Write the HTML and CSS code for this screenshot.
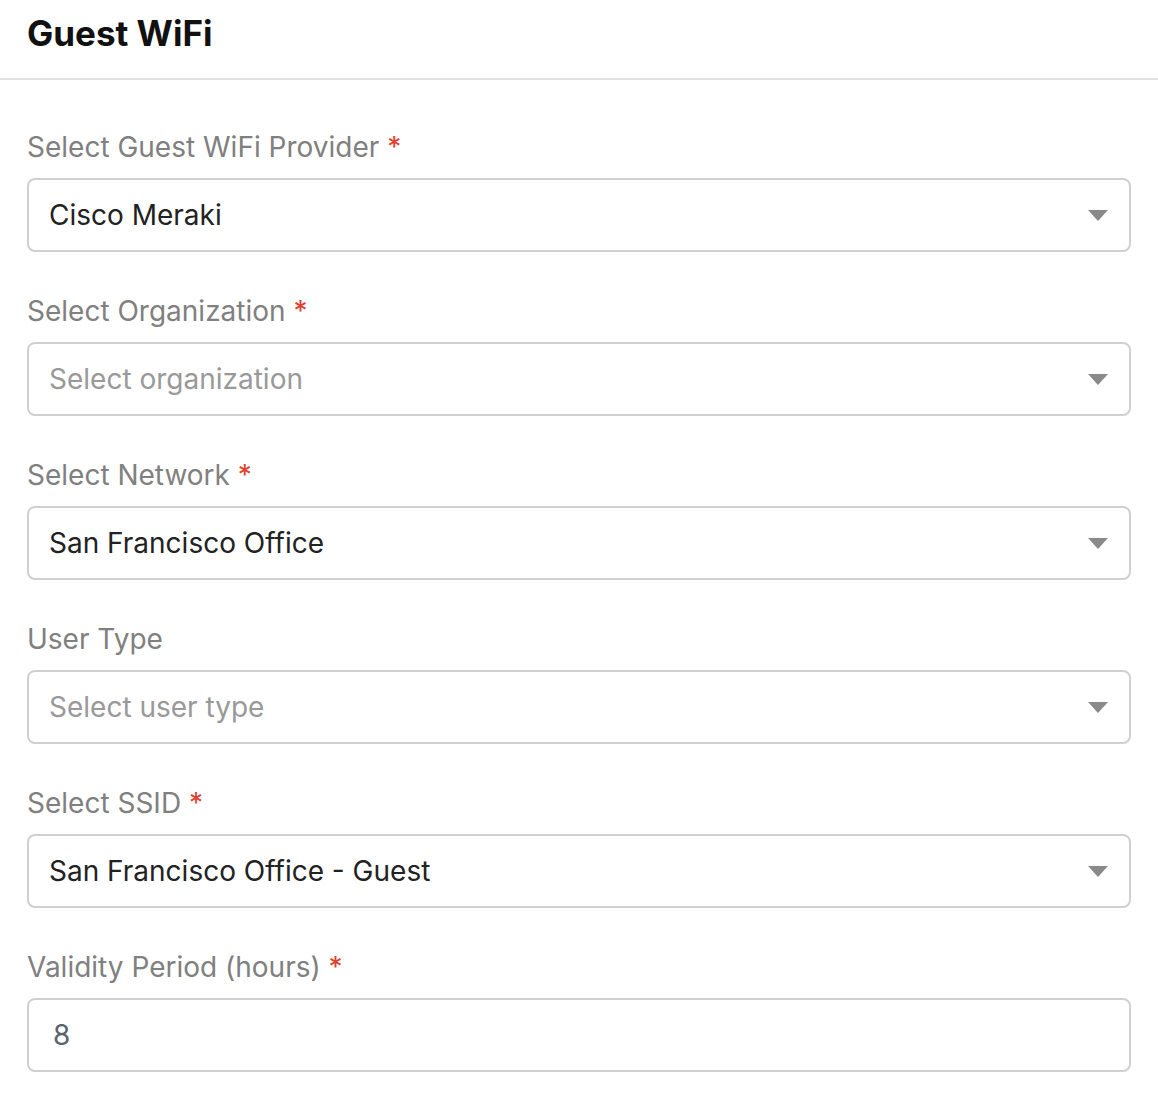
FILE: index.html
```html
<!DOCTYPE html>
<html lang="en">
<head>
  <meta charset="UTF-8">
  <title>Guest WiFi</title>
  <link rel="stylesheet" href="styles.css">
</head>
<body>

  <header class="page-header">
    <h1>Guest WiFi</h1>
  </header>

  <form class="wifi-form">
    <div class="field">
      <label>Select Guest WiFi Provider <span class="req">*</span></label>
      <div class="select-box">
        <span class="value">Cisco Meraki</span>
        <span class="caret"></span>
      </div>
    </div>

    <div class="field">
      <label>Select Organization <span class="req">*</span></label>
      <div class="select-box">
        <span class="value placeholder">Select organization</span>
        <span class="caret"></span>
      </div>
    </div>

    <div class="field">
      <label>Select Network <span class="req">*</span></label>
      <div class="select-box">
        <span class="value">San Francisco Office</span>
        <span class="caret"></span>
      </div>
    </div>

    <div class="field">
      <label>User Type</label>
      <div class="select-box">
        <span class="value placeholder">Select user type</span>
        <span class="caret"></span>
      </div>
    </div>

    <div class="field">
      <label>Select SSID <span class="req">*</span></label>
      <div class="select-box">
        <span class="value">San Francisco Office - Guest</span>
        <span class="caret"></span>
      </div>
    </div>

    <div class="field">
      <label>Validity Period (hours) <span class="req">*</span></label>
      <input type="text" class="text-input" value="8">
    </div>
  </form>

</body>
</html>
```

FILE: styles.css
```css
body {
  margin: 0;
  padding: 0;
  background: #ffffff;
  font-family: Inter, "Noto Sans", sans-serif;
  color: #333;
}
.page-header {
  padding: 12px 27px 0;
  height: 66px;
  border-bottom: 2px solid #e0e0e0;
}
.page-header h1 {
  margin: 0;
  font-size: 35px;
  font-weight: 700;
  line-height: 42px;
  color: #111;
}
.wifi-form {
  padding: 49px 27px 0 27px;
}
.field {
  display: flex;
  flex-direction: column;
  margin-bottom: 41px;
}
.field label {
  font-size: 28px;
  line-height: 36px;
  color: #808080;
  margin-bottom: 13px;
}
.req {
  color: #e0402c;
}
.select-box, .text-input {
  box-sizing: border-box;
  height: 74px;
  border: 2px solid #d0d0d0;
  border-radius: 8px;
  background: #fff;
  display: flex;
  align-items: center;
  justify-content: space-between;
  padding: 0 21px 0 20px;
}
.value {
  font-size: 28px;
  color: #222;
}
.value.placeholder {
  color: #999;
}
.caret {
  width: 0;
  height: 0;
  border-left: 10px solid transparent;
  border-right: 10px solid transparent;
  border-top: 11px solid #8a8a8a;
}
.text-input {
  width: 100%;
  font-family: inherit;
  font-size: 28px;
  color: #5a6470;
  padding-left: 24px;
  outline: none;
}
```
